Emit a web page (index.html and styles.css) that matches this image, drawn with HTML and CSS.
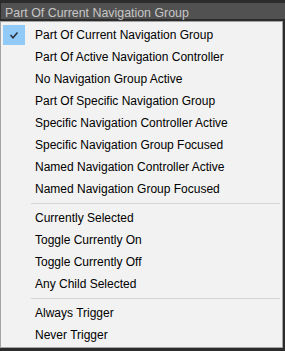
FILE: index.html
```html
<!DOCTYPE html>
<html lang="en">

<head>
  <meta charset="UTF-8" />
  <meta name="viewport" content="width=device-width, initial-scale=1.0" />
  <title>Navigation Condition</title>
  <link rel="stylesheet" href="styles.css">
</head>

<body>
  <div class="field">Part Of Current Navigation Group</div>

  <div class="menu">
    <div class="item checked">
      <span class="check">
        <svg width="22" height="20" viewBox="0 0 22 20">
          <polyline points="7.5,10 10,12.8 14.5,7.5" fill="none" stroke="#2d3540" stroke-width="1.6" />
        </svg>
      </span>
      <span class="label">Part Of Current Navigation Group</span>
    </div>
    <div class="item"><span class="check"></span><span class="label">Part Of Active Navigation Controller</span></div>
    <div class="item"><span class="check"></span><span class="label">No Navigation Group Active</span></div>
    <div class="item"><span class="check"></span><span class="label">Part Of Specific Navigation Group</span></div>
    <div class="item"><span class="check"></span><span class="label">Specific Navigation Controller Active</span></div>
    <div class="item"><span class="check"></span><span class="label">Specific Navigation Group Focused</span></div>
    <div class="item"><span class="check"></span><span class="label">Named Navigation Controller Active</span></div>
    <div class="item"><span class="check"></span><span class="label">Named Navigation Group Focused</span></div>

    <div class="separator"></div>

    <div class="item"><span class="check"></span><span class="label">Currently Selected</span></div>
    <div class="item"><span class="check"></span><span class="label">Toggle Currently On</span></div>
    <div class="item"><span class="check"></span><span class="label">Toggle Currently Off</span></div>
    <div class="item"><span class="check"></span><span class="label">Any Child Selected</span></div>

    <div class="separator"></div>

    <div class="item"><span class="check"></span><span class="label">Always Trigger</span></div>
    <div class="item"><span class="check"></span><span class="label">Never Trigger</span></div>
  </div>
</body>

</html>
```

FILE: styles.css
```css
body {
  margin: 0;
  background-color: #2c2c2c;
  font-family: "Liberation Sans", Arial, sans-serif;
  font-size: 12px;
}

.field {
  margin: 3px 0 2px 1px;
  height: 14px;
  padding: 2px 0 0 4px;
  background-color: #515151;
  color: #c6c6c6;
  font-size: 12.4px;
  line-height: 16px;
  white-space: nowrap;
}

.menu {
  width: 281px;
  border: 1px solid #a3a3a3;
  background-color: #f2f2f2;
  padding: 2px 0 1px 0;
}

.item {
  display: flex;
  align-items: center;
  height: 22px;
  color: #000;
  white-space: nowrap;
}

.check {
  width: 22px;
  height: 20px;
  margin-left: 2px;
  margin-right: 10px;
  flex-shrink: 0;
}

.checked .check {
  background-color: #91c9f7;
}

.check svg {
  display: block;
}

.label {
  line-height: 22px;
}

.separator {
  height: 1px;
  margin: 3px 2px 3px 30px;
  background-color: #d5d5d5;
}
```
